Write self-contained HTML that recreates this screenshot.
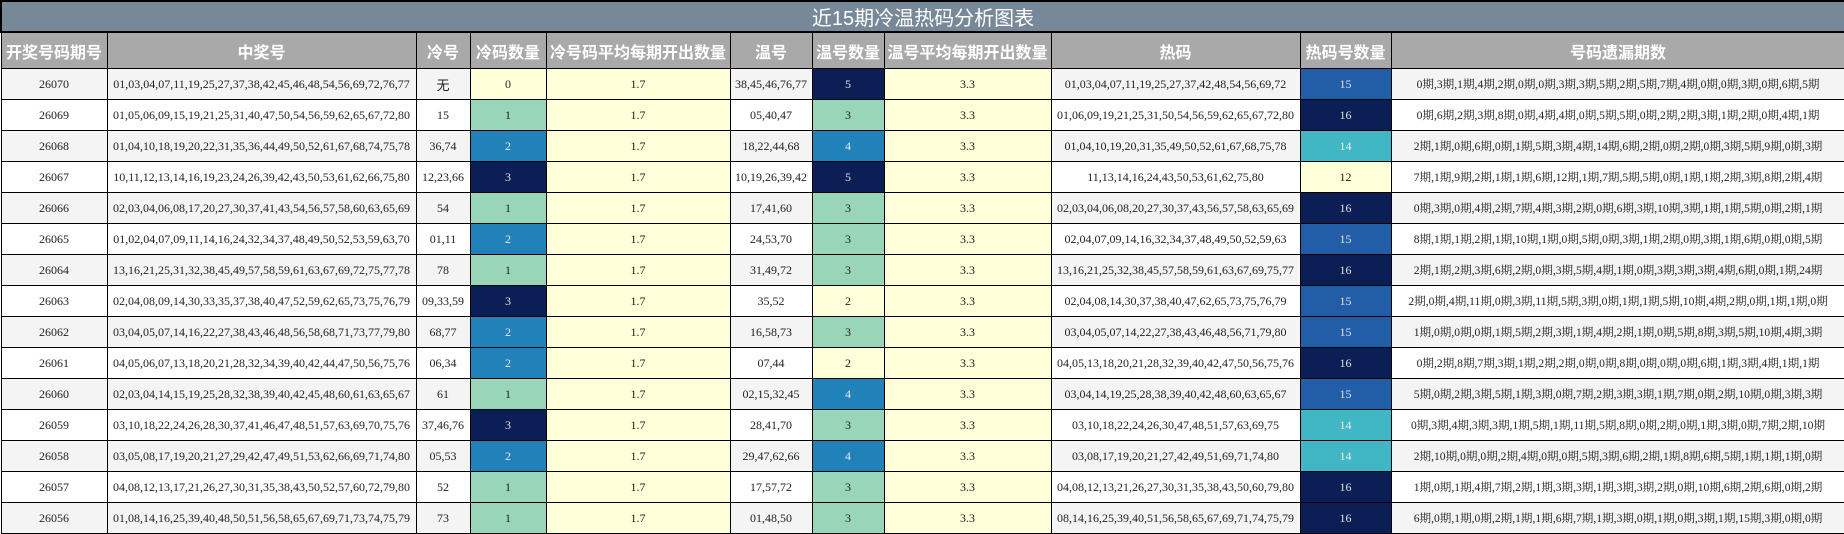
<!DOCTYPE html>
<html><head><meta charset="utf-8">
<style>
html,body{margin:0;padding:0;background:#fff;}
table{border-collapse:collapse;table-layout:fixed;width:1844px;height:532px;}
td,th{border:1px solid #000;text-align:center;padding:0 1px;overflow:hidden;white-space:nowrap;}
.t{background:#778899;color:#fff;font:20px "Liberation Sans","Noto Sans CJK SC",sans-serif;height:27px;border:2px solid #000;}
th{background:#a9a9a9;color:#fff;font:bold 16px "Liberation Sans","Noto Sans CJK SC",sans-serif;height:35px;}
td{font:12px "Liberation Serif","Noto Serif CJK SC","Noto Sans CJK SC",serif;color:#222;height:30px;}
td.o{font-size:11.6px;}
tr.g td{background:#f4f4f4;}
tr.w td{background:#fff;}
tr td.y{background:#ffffd9;}
tr td.c1{background:#99d5b9;}
tr td.c2{background:#2181b9;color:#e8e8e8;}
tr td.c3{background:#0b1f56;color:#e0e0e0;}
tr td.h14{background:#41b6c4;color:#eee;}
tr td.h15{background:#225ea8;color:#e0e0e0;}
tr td.h16{background:#0b1f56;color:#e0e0e0;}
td.s{font-family:"Liberation Sans","Noto Sans CJK SC",sans-serif;font-size:13px;}
</style></head><body>
<table>
<colgroup><col style="width:106px"><col style="width:309px"><col style="width:54px"><col style="width:76px"><col style="width:184px"><col style="width:82px"><col style="width:72px"><col style="width:167px"><col style="width:249px"><col style="width:91px"><col style="width:454px"></colgroup>
<tr><td class="t" colspan="11">近15期冷温热码分析图表</td></tr>
<tr><th>开奖号码期号</th><th>中奖号</th><th>冷号</th><th>冷码数量</th><th>冷号码平均每期开出数量</th><th>温号</th><th>温号数量</th><th>温号平均每期开出数量</th><th>热码</th><th>热码号数量</th><th>号码遗漏期数</th></tr>
<tr class="g"><td>26070</td><td>01,03,04,07,11,19,25,27,37,38,42,45,46,48,54,56,69,72,76,77</td><td class="s">无</td><td class="y">0</td><td class="y">1.7</td><td>38,45,46,76,77</td><td class="c3">5</td><td class="y">3.3</td><td>01,03,04,07,11,19,25,27,37,42,48,54,56,69,72</td><td class="h15">15</td><td class="o">0期,3期,1期,4期,2期,0期,0期,3期,3期,5期,2期,5期,7期,4期,0期,0期,3期,0期,6期,5期</td></tr>
<tr class="w"><td>26069</td><td>01,05,06,09,15,19,21,25,31,40,47,50,54,56,59,62,65,67,72,80</td><td>15</td><td class="c1">1</td><td class="y">1.7</td><td>05,40,47</td><td class="c1">3</td><td class="y">3.3</td><td>01,06,09,19,21,25,31,50,54,56,59,62,65,67,72,80</td><td class="h16">16</td><td class="o">0期,6期,2期,3期,8期,0期,4期,4期,0期,5期,5期,0期,2期,2期,3期,1期,2期,0期,4期,1期</td></tr>
<tr class="g"><td>26068</td><td>01,04,10,18,19,20,22,31,35,36,44,49,50,52,61,67,68,74,75,78</td><td>36,74</td><td class="c2">2</td><td class="y">1.7</td><td>18,22,44,68</td><td class="c2">4</td><td class="y">3.3</td><td>01,04,10,19,20,31,35,49,50,52,61,67,68,75,78</td><td class="h14">14</td><td class="o">2期,1期,0期,6期,0期,1期,5期,3期,4期,14期,6期,2期,0期,2期,0期,3期,5期,9期,0期,3期</td></tr>
<tr class="w"><td>26067</td><td>10,11,12,13,14,16,19,23,24,26,39,42,43,50,53,61,62,66,75,80</td><td>12,23,66</td><td class="c3">3</td><td class="y">1.7</td><td>10,19,26,39,42</td><td class="c3">5</td><td class="y">3.3</td><td>11,13,14,16,24,43,50,53,61,62,75,80</td><td class="y">12</td><td class="o">7期,1期,9期,2期,1期,1期,6期,12期,1期,7期,5期,5期,0期,1期,1期,2期,3期,8期,2期,4期</td></tr>
<tr class="g"><td>26066</td><td>02,03,04,06,08,17,20,27,30,37,41,43,54,56,57,58,60,63,65,69</td><td>54</td><td class="c1">1</td><td class="y">1.7</td><td>17,41,60</td><td class="c1">3</td><td class="y">3.3</td><td>02,03,04,06,08,20,27,30,37,43,56,57,58,63,65,69</td><td class="h16">16</td><td class="o">0期,3期,0期,4期,2期,7期,4期,3期,2期,0期,6期,3期,10期,3期,1期,1期,5期,0期,2期,1期</td></tr>
<tr class="w"><td>26065</td><td>01,02,04,07,09,11,14,16,24,32,34,37,48,49,50,52,53,59,63,70</td><td>01,11</td><td class="c2">2</td><td class="y">1.7</td><td>24,53,70</td><td class="c1">3</td><td class="y">3.3</td><td>02,04,07,09,14,16,32,34,37,48,49,50,52,59,63</td><td class="h15">15</td><td class="o">8期,1期,1期,2期,1期,10期,1期,0期,5期,0期,3期,1期,2期,0期,3期,1期,6期,0期,0期,5期</td></tr>
<tr class="g"><td>26064</td><td>13,16,21,25,31,32,38,45,49,57,58,59,61,63,67,69,72,75,77,78</td><td>78</td><td class="c1">1</td><td class="y">1.7</td><td>31,49,72</td><td class="c1">3</td><td class="y">3.3</td><td>13,16,21,25,32,38,45,57,58,59,61,63,67,69,75,77</td><td class="h16">16</td><td class="o">2期,1期,2期,3期,6期,2期,0期,3期,5期,4期,1期,0期,3期,3期,3期,4期,6期,0期,1期,24期</td></tr>
<tr class="w"><td>26063</td><td>02,04,08,09,14,30,33,35,37,38,40,47,52,59,62,65,73,75,76,79</td><td>09,33,59</td><td class="c3">3</td><td class="y">1.7</td><td>35,52</td><td class="y">2</td><td class="y">3.3</td><td>02,04,08,14,30,37,38,40,47,62,65,73,75,76,79</td><td class="h15">15</td><td class="o">2期,0期,4期,11期,0期,3期,11期,5期,3期,0期,1期,1期,5期,10期,4期,2期,0期,1期,1期,0期</td></tr>
<tr class="g"><td>26062</td><td>03,04,05,07,14,16,22,27,38,43,46,48,56,58,68,71,73,77,79,80</td><td>68,77</td><td class="c2">2</td><td class="y">1.7</td><td>16,58,73</td><td class="c1">3</td><td class="y">3.3</td><td>03,04,05,07,14,22,27,38,43,46,48,56,71,79,80</td><td class="h15">15</td><td class="o">1期,0期,0期,0期,1期,5期,2期,3期,1期,4期,2期,1期,0期,5期,8期,3期,5期,10期,4期,3期</td></tr>
<tr class="w"><td>26061</td><td>04,05,06,07,13,18,20,21,28,32,34,39,40,42,44,47,50,56,75,76</td><td>06,34</td><td class="c2">2</td><td class="y">1.7</td><td>07,44</td><td class="y">2</td><td class="y">3.3</td><td>04,05,13,18,20,21,28,32,39,40,42,47,50,56,75,76</td><td class="h16">16</td><td class="o">0期,2期,8期,7期,3期,1期,2期,2期,0期,0期,8期,0期,0期,0期,6期,1期,3期,4期,1期,1期</td></tr>
<tr class="g"><td>26060</td><td>02,03,04,14,15,19,25,28,32,38,39,40,42,45,48,60,61,63,65,67</td><td>61</td><td class="c1">1</td><td class="y">1.7</td><td>02,15,32,45</td><td class="c2">4</td><td class="y">3.3</td><td>03,04,14,19,25,28,38,39,40,42,48,60,63,65,67</td><td class="h15">15</td><td class="o">5期,0期,2期,3期,5期,1期,3期,0期,7期,2期,3期,3期,1期,7期,0期,2期,10期,0期,3期,3期</td></tr>
<tr class="w"><td>26059</td><td>03,10,18,22,24,26,28,30,37,41,46,47,48,51,57,63,69,70,75,76</td><td>37,46,76</td><td class="c3">3</td><td class="y">1.7</td><td>28,41,70</td><td class="c1">3</td><td class="y">3.3</td><td>03,10,18,22,24,26,30,47,48,51,57,63,69,75</td><td class="h14">14</td><td class="o">0期,3期,4期,3期,3期,1期,5期,1期,11期,5期,8期,0期,2期,0期,1期,3期,0期,7期,2期,10期</td></tr>
<tr class="g"><td>26058</td><td>03,05,08,17,19,20,21,27,29,42,47,49,51,53,62,66,69,71,74,80</td><td>05,53</td><td class="c2">2</td><td class="y">1.7</td><td>29,47,62,66</td><td class="c2">4</td><td class="y">3.3</td><td>03,08,17,19,20,21,27,42,49,51,69,71,74,80</td><td class="h14">14</td><td class="o">2期,10期,0期,0期,2期,4期,0期,0期,5期,3期,6期,2期,1期,8期,6期,5期,1期,1期,1期,0期</td></tr>
<tr class="w"><td>26057</td><td>04,08,12,13,17,21,26,27,30,31,35,38,43,50,52,57,60,72,79,80</td><td>52</td><td class="c1">1</td><td class="y">1.7</td><td>17,57,72</td><td class="c1">3</td><td class="y">3.3</td><td>04,08,12,13,21,26,27,30,31,35,38,43,50,60,79,80</td><td class="h16">16</td><td class="o">1期,0期,1期,4期,7期,2期,1期,3期,3期,1期,3期,3期,2期,0期,10期,6期,2期,6期,0期,2期</td></tr>
<tr class="g"><td>26056</td><td>01,08,14,16,25,39,40,48,50,51,56,58,65,67,69,71,73,74,75,79</td><td>73</td><td class="c1">1</td><td class="y">1.7</td><td>01,48,50</td><td class="c1">3</td><td class="y">3.3</td><td>08,14,16,25,39,40,51,56,58,65,67,69,71,74,75,79</td><td class="h16">16</td><td class="o">6期,0期,1期,0期,2期,1期,1期,6期,7期,1期,3期,0期,1期,0期,3期,1期,15期,3期,0期,0期</td></tr>
</table>
</body></html>
